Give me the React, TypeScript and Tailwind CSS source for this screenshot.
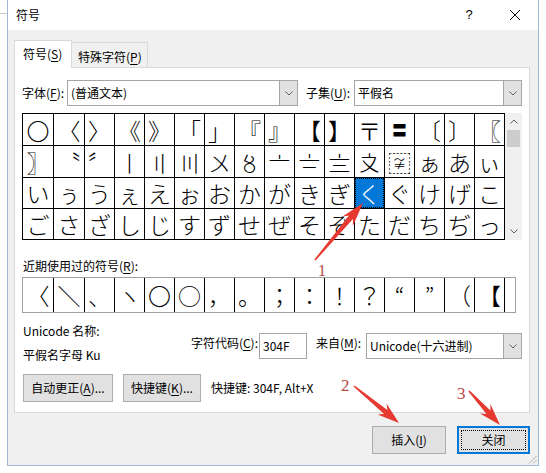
import React from "react";

const row1 = ["〇", "〈", "〉", "《", "》", "「", "」", "『", "』", "【", "】", "〒", "〓", "〔", "〕", "〖"];
const row2 = ["〗", "〝", "〞", "〡", "〢", "〣", "〤", "〥", "〦", "〧", "〨", "〩", "〾", "ぁ", "あ", "ぃ"];
const row3 = ["い", "ぅ", "う", "ぇ", "え", "ぉ", "お", "か", "が", "き", "ぎ", "く", "ぐ", "け", "げ", "こ"];
const row4 = ["ご", "さ", "ざ", "し", "じ", "す", "ず", "せ", "ぜ", "そ", "ぞ", "た", "だ", "ち", "ぢ", "っ"];
const rows = [row1, row2, row3, row4];
const recent = ["〈", "＼", "、", "ヽ", "〇", "○", "，", "。", "；", "：", "！", "？", "“", "”", "（", "【", ""];

function Chev({ up }: { up?: boolean }) {
  return (
    <svg width="8" height="5" viewBox="0 0 8 5">
      <polyline
        points={up ? "0.5,4.5 4,1 7.5,4.5" : "0.5,0.5 4,4 7.5,0.5"}
        fill="none"
        stroke="#606060"
        strokeWidth="1"
      />
    </svg>
  );
}

function Combo({ text, cls }: { text: string; cls: string }) {
  return (
    <div className={`flex h-[26px] ${cls}`}>
      <div className="flex-1 flex items-center pl-[3px] bg-white border-y border-l border-[#a6a6a6] text-[12px] leading-[16px] whitespace-nowrap overflow-hidden">
        {text}
      </div>
      <div className="w-[19px] flex items-center justify-center bg-[#e1e1e1] border border-[#a6a6a6]">
        <Chev />
      </div>
    </div>
  );
}

function arrowPts(tx: number, ty: number, hx: number, hy: number, headLen: number, headW: number, neckW: number, tailW: number) {
  const dx = hx - tx;
  const dy = hy - ty;
  const L = Math.hypot(dx, dy);
  const ux = dx / L;
  const uy = dy / L;
  const nx = -uy;
  const ny = ux;
  const bx = hx - ux * headLen;
  const by = hy - uy * headLen;
  const kx = hx - ux * headLen * 0.78;
  const ky = hy - uy * headLen * 0.78;
  const p = (x: number, y: number) => `${x.toFixed(1)},${y.toFixed(1)}`;
  return [
    p(tx + nx * tailW, ty + ny * tailW),
    p(kx + nx * neckW, ky + ny * neckW),
    p(bx + nx * headW, by + ny * headW),
    p(hx, hy),
    p(bx - nx * headW, by - ny * headW),
    p(kx - nx * neckW, ky - ny * neckW),
    p(tx - nx * tailW, ty - ny * tailW),
  ].join(" ");
}

const U = ({ c }: { c: string }) => <span className="underline underline-offset-[2px]">{c}</span>;

export default function App() {
  return (
    <div className="relative w-[546px] h-[473px] bg-white overflow-hidden flex font-['Noto_Sans_CJK_SC',sans-serif] text-black text-[12px]">
      <div className="w-[7px] pt-[13px]">
        <div className="h-px bg-[#c8c8c8]" />
      </div>
      <div className="relative w-[532px] h-[466px] border-x border-b border-[#9fb9d4] flex flex-col">
        {/* title bar */}
        <div className="h-[30px] bg-white flex items-center">
          <div className="pl-[8px] text-[12px] leading-[16px]">符号</div>
          <div className="ml-auto w-[46px] h-full flex items-center justify-center text-[13px] font-['Liberation_Sans',sans-serif]">?</div>
          <div className="w-[46px] h-full flex items-center justify-center">
            <svg width="10" height="10" viewBox="0 0 10 10">
              <line x1="0" y1="0" x2="10" y2="10" stroke="#111" strokeWidth="1" />
              <line x1="10" y1="0" x2="0" y2="10" stroke="#111" strokeWidth="1" />
            </svg>
          </div>
        </div>
        {/* body */}
        <div className="flex-1 bg-[#f0f0f0] pt-[10px] pl-[6px] flex flex-col">
          {/* tabs */}
          <div className="flex items-end h-[28px] relative z-10">
            <div className="w-[58px] h-[28px] bg-white border-t border-x border-[#d9d9d9] pl-[8px] pt-[5px] leading-[16px]">
              符号(<U c="S" />)
            </div>
            <div className="w-[76px] h-[25px] bg-[#f0f0f0] border-t border-r border-[#d9d9d9] pl-[6px] pt-[6px] leading-[16px] mb-px">
              特殊字符(<U c="P" />)
            </div>
          </div>
          {/* panel */}
          <div className="w-[516px] -mt-px bg-white border border-[#d9d9d9] px-[7px] pt-[12px] pb-[10px] flex flex-col">
            <div className="flex items-center h-[26px]">
              <div className="w-[45px] leading-[16px]">字体(<U c="F" />):</div>
              <Combo text="(普通文本)" cls="w-[231px]" />
              <div className="w-[56px] pl-[8px] leading-[16px]">子集(<U c="U" />):</div>
              <Combo text="平假名" cls="w-[168px]" />
            </div>
            {/* grid */}
            <div className="mt-[7px] flex">
              <div className="grid grid-cols-[30px_30px_repeat(14,29px)] grid-rows-[31px_31px_30px_30px] gap-px bg-black border border-black">
                {rows.map((r, ri) =>
                  r.map((ch, ci) => {
                    const sel = ri === 2 && ci === 11;
                    const small = ch === "〓";
                    return (
                      <div
                        key={`${ri}-${ci}`}
                        className={
                          sel
                            ? "flex items-center justify-center bg-[#0078d7] text-white text-[23px] leading-[28px] font-['Noto_Sans_CJK_JP',sans-serif] font-light outline-1 outline-dotted outline-black -outline-offset-1"
                            : small
                            ? "flex items-center justify-center bg-white text-black text-[15px] leading-[20px] font-['Noto_Sans_CJK_JP',sans-serif] font-bold"
                            : "flex items-center justify-center bg-white text-black text-[23px] leading-[28px] font-['Noto_Sans_CJK_JP',sans-serif] font-light"
                        }
                      >
                        {ch}
                      </div>
                    );
                  })
                )}
              </div>
              <div className="w-[17px] bg-[#f0f0f0] flex flex-col">
                <div className="h-[17px] flex items-center justify-center">
                  <Chev up />
                </div>
                <div className="mx-[2px] h-[17px] bg-[#cdcdcd]" />
                <div className="flex-1" />
                <div className="h-[17px] flex items-center justify-center">
                  <Chev />
                </div>
              </div>
            </div>
            {/* recent */}
            <div className="mt-[18px] leading-[16px] pl-px">
              近期使用过的符号(<U c="R" />):
            </div>
            <div className="mt-[3px] w-[494px] h-[36px] border border-[#a0a0a0] flex overflow-hidden">
              {recent.map((ch, i) => (
                <div
                  key={i}
                  className={
                    i === 0
                      ? "shrink-0 w-[30px] h-full flex items-center justify-center text-[23px] leading-[28px] font-['Noto_Sans_CJK_JP',sans-serif] font-light"
                      : i === 1
                      ? "shrink-0 w-[31px] h-full border-l border-black flex items-center justify-center text-[23px] leading-[28px] font-['Noto_Sans_CJK_JP',sans-serif] font-light"
                      : "shrink-0 w-[30px] h-full border-l border-black flex items-center justify-center text-[23px] leading-[28px] font-['Noto_Sans_CJK_JP',sans-serif] font-light"
                  }
                >
                  {ch}
                </div>
              ))}
            </div>
            {/* info */}
            <div className="mt-[10px] flex items-start">
              <div className="w-[168px] pl-px flex flex-col">
                <div className="h-[16px] leading-[16px]">Unicode 名称:</div>
                <div className="mt-[8px] h-[16px] leading-[16px]">平假名字母 Ku</div>
              </div>
              <div className="w-[68px] mt-[12px] leading-[16px] text-right whitespace-nowrap">
                字符代码(<U c="C" />):
              </div>
              <div className="ml-px mt-[10px] w-[48px] h-[26px] border border-[#a6a6a6] bg-white flex items-center pl-[3px] leading-[16px]">
                304F
              </div>
              <div className="ml-[9px] mt-[12px] w-[50px] leading-[16px] whitespace-nowrap">
                来自(<U c="M" />):
              </div>
              <div className="mt-[10px] flex-1 flex">
                <Combo text="Unicode(十六进制)" cls="w-full" />
              </div>
            </div>
            {/* buttons */}
            <div className="mt-[11px] flex items-center h-[28px]">
              <div className="ml-px w-[90px] h-[28px] bg-[#e1e1e1] border border-[#adadad] flex items-center justify-center leading-[16px]">
                自动更正(<U c="A" />)...
              </div>
              <div className="ml-[10px] w-[78px] h-[28px] bg-[#e1e1e1] border border-[#adadad] flex items-center justify-center leading-[16px]">
                快捷键(<U c="K" />)...
              </div>
              <div className="ml-[10px] leading-[16px]">快捷键: 304F, Alt+X</div>
            </div>
          </div>
          {/* dialog buttons */}
          <div className="w-[516px] mt-[13px] flex justify-end gap-[11px]">
            <div className="w-[74px] h-[28px] bg-[#e1e1e1] border border-[#adadad] flex items-center justify-center leading-[16px]">
              插入(<U c="I" />)
            </div>
            <div className="w-[73px] h-[28px] bg-[#e1e1e1] border-2 border-[#0078d7] flex items-center justify-center">
              <div className="w-[65px] h-[20px] border border-dotted border-black flex items-center justify-center leading-[16px]">关闭</div>
            </div>
          </div>
        </div>
        <svg className="absolute right-[1px] bottom-[1px]" width="10" height="10" viewBox="0 0 10 10">
          <line x1="9.5" y1="2" x2="2" y2="9.5" stroke="#b0b0b0" strokeWidth="1" />
          <line x1="9.5" y1="6" x2="6" y2="9.5" stroke="#b0b0b0" strokeWidth="1" />
        </svg>
      </div>
      {/* annotations */}
      <svg className="absolute left-0 top-0 pointer-events-none" width="546" height="473" viewBox="0 0 546 473">
        <polygon points={arrowPts(315, 260, 363, 203, 24, 7, 2.6, 0.8)} fill="#e6392f" />
        <polygon points={arrowPts(354, 386, 399, 423, 22, 7, 2.6, 0.8)} fill="#e6392f" />
        <polygon points={arrowPts(469, 391, 500, 425, 22, 7, 2.6, 0.8)} fill="#e6392f" />
      </svg>
      <div className="absolute left-[318px] top-[262px] text-[16px] leading-[18px] text-[#b64a42] font-['Liberation_Serif',serif]">1</div>
      <div className="absolute left-[341px] top-[377px] text-[17px] leading-[18px] text-[#b64a42] font-['Liberation_Serif',serif]">2</div>
      <div className="absolute left-[457px] top-[385px] text-[17px] leading-[18px] text-[#b64a42] font-['Liberation_Serif',serif]">3</div>
    </div>
  );
}
